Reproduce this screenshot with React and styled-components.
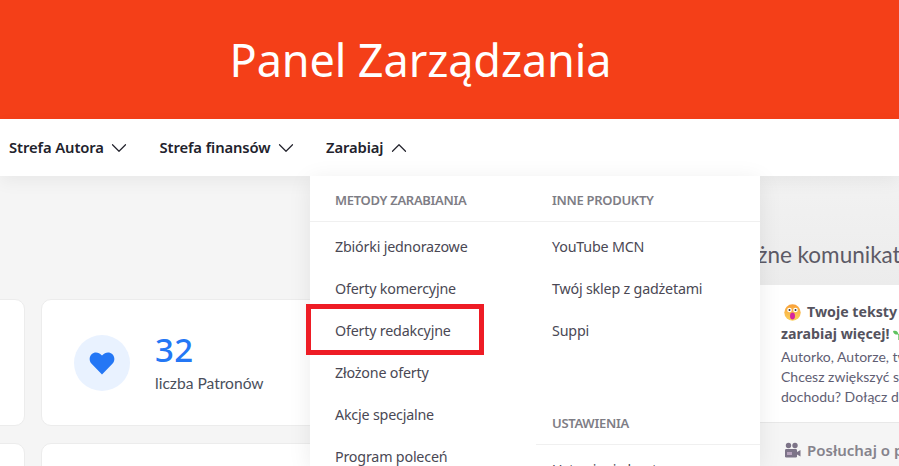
import React from 'react';
import styled, { createGlobalStyle } from 'styled-components';
import { ChevronDown, ChevronUp } from 'lucide-react';

const Global = createGlobalStyle`
  html, body { margin: 0; padding: 0; background: #f5f5f5; overflow: hidden; }
  * { box-sizing: border-box; }
`;
const Page = styled.div`
  position: relative; width: 899px; height: 466px; overflow: hidden; background: #f5f5f5;
  font-family: Lato, "Noto Sans", sans-serif;
`;
const Banner = styled.header`
  height: 119px; background: #f43f18; display: flex; align-items: center; justify-content: center;
  padding-right: 58px;
`;
const Title = styled.h1`
  margin: 0; color: #fff; font: 400 45px/1 "Noto Sans", sans-serif; letter-spacing: -0.1px;
  padding-bottom: 1px;
`;
const Nav = styled.nav`
  position: relative; z-index: 1; height: 57px; background: #fff; display: flex; align-items: center; gap: 27px; padding: 0 0 0 9px;
  box-shadow: 0 6px 16px rgba(0,0,0,.05);
`;
const NavItem = styled.div`
  display: flex; align-items: center; gap: 2.500px; color: #22222c; font: 600 14.800px/1 "Noto Sans", sans-serif;
  letter-spacing: -0.1px;
`;
const Main = styled.main`
  display: flex; height: 290px;
`;
const Stats = styled.section`
  width: 916px; flex: none; margin-left: -275px; padding-top: 123px; display: grid;
  grid-template-columns: 300px 300px; gap: 17px 16px; align-content: start;
`;
const Card = styled.div`
  height: 127px; background: #fff; border: 1px solid #ececec; border-radius: 10px;
  display: flex; align-items: center; padding-left: 32px; gap: 25px;
`;
const Round = styled.div`
  width: 56px; height: 56px; border-radius: 50%; background: #e9f2ff; display: flex; align-items: center; justify-content: center;
`;
const StatValue = styled.div`
  color: #2477f5; font: 500 33px/1 "Noto Sans", sans-serif; letter-spacing: 0.4px;
`;
const StatLabel = styled.div`
  color: #4a4f5c; font: 400 15.600px/1 Lato, sans-serif; margin-top: 10px;
`;
const Side = styled.aside`
  width: 300px; flex: none;
`;
const SideTitle = styled.h2`
  margin: 0; height: 109px; padding: 66px 0 0 83px; color: #5c5a66; font: 400 22.500px/26px Lato, sans-serif; white-space: nowrap;
  background: linear-gradient(#f2f2f2, #ececec);
`;
const Notice = styled.div`
  background: ${p => (p.$read ? '#f5f5f5' : '#fff')}; height: ${p => (p.$read ? 60 : 138)}px; padding: 16px 0 0 140px;
  border-bottom: 1px solid #e8e8e8;
`;
const NoticeTitle = styled.div`
  color: ${p => (p.$read ? '#85838c' : '#55535e')}; font: ${p => (p.$read ? '600 15px' : '700 14.200px')}/22px "Noto Sans", sans-serif; white-space: nowrap;
  display: flex; align-items: center; gap: ${p => (p.$tight ? 3 : 6)}px;
`;
const Indent = styled.span`
  display: inline-flex; margin-left: 3px;
`;
const NoticeBody = styled.div`
  color: #5f5e73; font: 400 14px/20px Lato, sans-serif; white-space: nowrap; margin-top: 2px;
`;
const Menu = styled.div`
  position: absolute; z-index: 2; left: 310px; top: 176px; width: 450px; height: 290px; background: #fff;
  display: grid; grid-template-columns: 226px 1fr; box-shadow: 0 4px 22px rgba(0,0,0,.08);
`;
const MenuCol = styled.div`
  display: flex; flex-direction: column;
`;
const MenuHead = styled.div`
  height: 46px; margin-top: ${p => p.$mt || 0}px; padding: 17px 0 0 ${p => p.$pl}px; border-bottom: 1px solid #f0f0f0;
  color: #7e7d85; font: 600 13px/14px "Noto Sans", sans-serif; letter-spacing: -0.3px; white-space: nowrap; flex: none;
`;
const MenuItem = styled.div`
  height: 42px; padding-left: ${p => p.$pl}px; display: flex; align-items: center; color: #4a4854;
  font: 400 14.300px/1 "Noto Sans", sans-serif; letter-spacing: -0.2px; white-space: nowrap; flex: none;
`;
const List = styled.div`
  display: flex; flex-direction: column; flex: none; padding-top: 4px;
`;
const Mark = styled.div`
  position: absolute; z-index: 3; left: 306px; top: 304px; width: 178px; height: 51px; border: 5px solid #ee1c25; pointer-events: none;
`;

const Heart = () => (
  <svg width="26" height="24" viewBox="0 0 26 24">
    <path fill="#2477f5" d="M13 23.500 2.600 12.800C-.2 9.800.2 5.600 2.600 3.200 5.400.6 9.600.6 13 4.600 16.400.6 20.600.6 23.400 3.200c2.400 2.400 2.800 6.600 0 9.600Z" />
  </svg>
);
const Shock = () => (
  <svg width="17" height="17" viewBox="0 0 17 17">
    <defs><linearGradient id="sh" x1="0" y1="0" x2="0" y2="1"><stop offset="0" stopColor="#f9a13a" /><stop offset="1" stopColor="#fbd15b" /></linearGradient></defs>
    <circle cx="8.500" cy="8.500" r="8.200" fill="url(#sh)" />
    <circle cx="5.500" cy="6" r="2.300" fill="#fff" /><circle cx="11.500" cy="6" r="2.300" fill="#fff" />
    <circle cx="5.500" cy="6" r="1" fill="#333" /><circle cx="11.500" cy="6" r="1" fill="#333" />
    <ellipse cx="8.500" cy="12" rx="2.500" ry="3.400" fill="#d6249f" />
  </svg>
);
const Sprout = () => (
  <svg width="14" height="14" viewBox="0 0 14 14">
    <path fill="#5fc25f" d="M1 4c3-1 5 0 5.500 3.500C3.500 8 1.500 7 1 4Zm12-2c-3-1-5.500.5-6 4 3 .5 5.500-1 6-4ZM6.300 7h1v6h-1z" />
  </svg>
);
const Camera = () => (
  <svg width="17" height="17" viewBox="0 0 17 17">
    <circle cx="4.500" cy="3.500" r="2.700" fill="#7d7488" /><circle cx="11" cy="3.500" r="2.700" fill="#7d7488" />
    <rect x="1" y="7" width="12" height="8.500" rx="1.200" fill="#7d7488" />
    <path d="M13 10l3.500-2v6.500L13 12.500Z" fill="#7d7488" />
    <rect x="3" y="10" width="5" height="3" fill="#b7a3bd" />
  </svg>
);

const methods = ['Zbiórki jednorazowe', 'Oferty komercyjne', 'Oferty redakcyjne', 'Złożone oferty', 'Akcje specjalne', 'Program poleceń'];
const products = ['YouTube MCN', 'Twój sklep z gadżetami', 'Suppi'];

export default function App() {
  return (
    <Page>
      <Global />
      <Banner><Title>Panel Zarządzania</Title></Banner>
      <Nav>
        <NavItem>Strefa Autora <ChevronDown size={26} strokeWidth={1.1} /></NavItem>
        <NavItem>Strefa finansów <ChevronDown size={26} strokeWidth={1.1} /></NavItem>
        <NavItem>Zarabiaj <ChevronUp size={26} strokeWidth={1.1} /></NavItem>
      </Nav>
      <Main>
        <Stats>
          <Card />
          <Card>
            <Round><Heart /></Round>
            <div>
              <StatValue>32</StatValue>
              <StatLabel>liczba Patronów</StatLabel>
            </div>
          </Card>
          <Card />
          <Card />
        </Stats>
        <Side>
          <SideTitle>Ważne komunikaty</SideTitle>
          <Notice>
            <NoticeTitle><Indent><Shock /></Indent> Twoje teksty są czytane?</NoticeTitle>
            <NoticeTitle $tight>zarabiaj więcej! <Sprout /></NoticeTitle>
            <NoticeBody>Autorko, Autorze, twoje teksty<br />Chcesz zwiększyć swoje<br />dochodu? Dołącz do nas</NoticeBody>
          </Notice>
          <Notice $read>
            <NoticeTitle $read><Indent><Camera /></Indent> Posłuchaj o pracy</NoticeTitle>
          </Notice>
        </Side>
      </Main>
      <Menu>
        <MenuCol>
          <MenuHead $pl={25}>METODY ZARABIANIA</MenuHead>
          <List>{methods.map(m => <MenuItem key={m} $pl={25}>{m}</MenuItem>)}</List>
        </MenuCol>
        <MenuCol>
          <MenuHead $pl={16}>INNE PRODUKTY</MenuHead>
          <List>{products.map(m => <MenuItem key={m} $pl={16}>{m}</MenuItem>)}</List>
          <MenuHead $pl={16} $mt={47}>USTAWIENIA</MenuHead>
          <List><MenuItem $pl={16}>Ustawienia konta</MenuItem></List>
        </MenuCol>
      </Menu>
      <Mark />
    </Page>
  );
}
